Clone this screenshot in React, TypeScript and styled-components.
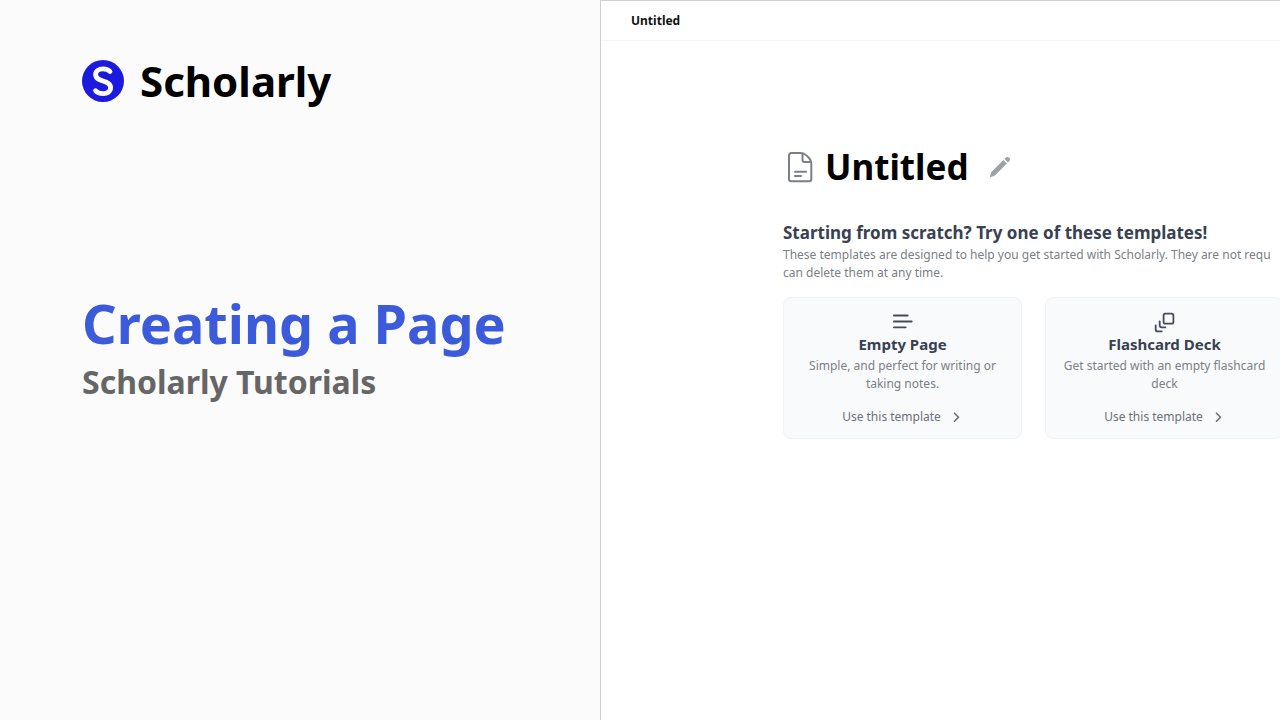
import React from "react";
import styled, { createGlobalStyle } from "styled-components";

const GlobalStyle = createGlobalStyle`
  * { box-sizing: border-box; }
  body {
    margin: 0;
    background: #fbfbfb;
    font-family: "Noto Sans", sans-serif;
  }
  h1, h2, h3, p { margin: 0; }
`;

const Page = styled.div`
  display: grid;
  grid-template-columns: 15fr 17fr;
  min-height: 100vh;
`;

const Intro = styled.section`
  background: #fbfbfb;
  padding: 52px 32px 0 82px;
`;

const Brand = styled.div`
  display: flex;
  align-items: center;
  gap: 16px;
  color: #000;
  font-size: 42px;
  line-height: 58px;
  font-weight: 700;
`;

const IntroTitle = styled.h1`
  margin-top: 176px;
  color: #3b5bdb;
  font-size: 54px;
  line-height: 74px;
  font-weight: 700;
  white-space: nowrap;
`;

const IntroSubtitle = styled.p`
  color: #666;
  font-size: 32px;
  line-height: 44px;
  font-weight: 700;
`;

const Preview = styled.main`
  min-width: 0;
  overflow: hidden;
  background: #fff;
  border: solid #d0d0d0;
  border-width: 1px 0 0 1px;
`;

const TopBar = styled.header`
  padding: 0 30px;
  border-bottom: 1px solid #f3f4f6;
  color: #111;
  font-size: 12px;
  line-height: 39px;
  font-weight: 700;
`;

const Content = styled.div`
  padding: 100px 0 0 182px;
`;

const TitleRow = styled.div`
  display: flex;
  align-items: center;
`;

const DocTitle = styled.h2`
  margin: 0 16px 0 8px;
  color: #000;
  font-size: 35px;
  line-height: 52px;
  font-weight: 700;
`;

const EditButton = styled.button`
  display: flex;
  padding: 4px;
  border: 0;
  background: none;
  cursor: pointer;
`;

const Heading = styled.h3`
  margin-top: 27px;
  color: #374151;
  font-size: 17px;
  line-height: 26px;
  font-weight: 700;
`;

const Description = styled.p`
  color: #7b7f86;
  font-size: 12px;
  line-height: 18px;
  white-space: nowrap;
`;

const Cards = styled.div`
  display: flex;
  gap: 23px;
  margin-top: 15px;
`;

const Card = styled.article`
  display: flex;
  flex: none;
  flex-direction: column;
  align-items: center;
  width: 239px;
  padding: 12px 16px 11px;
  border: 1px solid #f0f2f5;
  border-radius: 8px;
  background: #f9fafc;
  text-align: center;
`;

const CardTitle = styled.h3`
  color: #374151;
  font-size: 15px;
  line-height: 20px;
  font-weight: 700;
`;

const CardText = styled.p`
  margin-top: 3px;
  color: #7b7f86;
  font-size: 12px;
  line-height: 18px;
`;

const UseButton = styled.button`
  display: flex;
  align-items: center;
  gap: 8px;
  margin-top: 14px;
  padding: 0;
  border: 0;
  background: none;
  color: #6b7078;
  font: 12px/20px "Noto Sans", sans-serif;
  cursor: pointer;
`;

const Logo = () => (
  <svg width="42" height="42" viewBox="0 0 42 42" aria-hidden="true">
    <circle cx="21" cy="21" r="21" fill="#1d1ae0" />
    <path
      d="M28 11.5C26.3 9.6 23.8 8.8 21 8.8C16.8 8.8 13.6 11 13.6 14.6C13.6 18.5 17 19.7 21 21C25.4 22.4 28.6 23.6 28.6 27.6C28.6 31.4 25.6 33.6 21.2 33.6C18 33.6 15.3 32.7 13.6 30.7"
      fill="none"
      stroke="#fff"
      strokeWidth="4.8"
      strokeLinecap="round"
    />
  </svg>
);

const DocumentIcon = () => (
  <svg width="34" height="34" viewBox="0 0 34 34" fill="none" stroke="#7c7f8a" strokeWidth="2" strokeLinecap="round" strokeLinejoin="round" aria-hidden="true">
    <path d="M8.5 3H17.5Q21 3 23.4 5.4L25.8 7.8Q28.3 10.3 28.3 13.5V29Q28.3 31.2 26.1 31.2H8.2Q6 31.2 6 29V5.5Q6 3 8.5 3Z" />
    <path d="M19.5 3.5V10Q19.5 12 21.5 12H28M12 21.7H23M12 26H18" />
  </svg>
);

const PencilIcon = () => (
  <svg width="22" height="22" viewBox="0 0 22 22" fill="#9ca0a9" aria-hidden="true">
    <path d="M14.4 4.1L17.9 7.6L6.4 19.1Q5.8 19.7 5 20L1.6 21.1Q.7 21.3.9 20.4L2 17Q2.2 16.2 2.9 15.5ZM15.6 2.9L16.9 1.6Q18.6.2 20.3 1.7Q21.8 3.4 20.4 5.1L19.1 6.4Z" />
  </svg>
);

const LinesIcon = () => (
  <svg width="24" height="24" viewBox="0 0 24 24" fill="none" stroke="#454b57" strokeWidth="1.8" strokeLinecap="round" aria-hidden="true">
    <path d="M2.9 5.5H16.7M2.9 11.5H20.7M2.9 17.3H14.7" />
  </svg>
);

const DeckIcon = () => (
  <svg width="24" height="24" viewBox="0 0 24 24" fill="none" stroke="#454b57" strokeWidth="1.8" strokeLinecap="round" strokeLinejoin="round" aria-hidden="true">
    <rect x="10.6" y="3.7" width="9.8" height="10" rx="1.8" />
    <path d="M6.7 11.3V15.3Q6.7 17.3 8.7 17.3H12.4M2.7 15.3V19.4Q2.7 21.4 4.7 21.4H8.7" />
  </svg>
);

const ChevronIcon = () => (
  <svg width="14" height="14" viewBox="0 0 14 14" fill="none" stroke="#6b7078" strokeWidth="1.6" strokeLinecap="round" strokeLinejoin="round" aria-hidden="true">
    <path d="M5.5 3.2L9.5 7.2L5.5 11.2" />
  </svg>
);

const templates = [
  { title: "Empty Page", text: "Simple, and perfect for writing or taking notes.", Icon: LinesIcon },
  { title: "Flashcard Deck", text: "Get started with an empty flashcard deck", Icon: DeckIcon },
];

export default function App() {
  return (
    <>
      <GlobalStyle />
      <Page>
        <Intro>
          <Brand>
            <Logo />
            Scholarly
          </Brand>
          <IntroTitle>Creating a Page</IntroTitle>
          <IntroSubtitle>Scholarly Tutorials</IntroSubtitle>
        </Intro>
        <Preview>
          <TopBar>Untitled</TopBar>
          <Content>
            <TitleRow>
              <DocumentIcon />
              <DocTitle>Untitled</DocTitle>
              <EditButton aria-label="Edit title">
                <PencilIcon />
              </EditButton>
            </TitleRow>
            <Heading>Starting from scratch? Try one of these templates!</Heading>
            <Description>
              These templates are designed to help you get started with Scholarly. They are not requ
              <br />
              can delete them at any time.
            </Description>
            <Cards>
              {templates.map(({ title, text, Icon }) => (
                <Card key={title}>
                  <Icon />
                  <CardTitle>{title}</CardTitle>
                  <CardText>{text}</CardText>
                  <UseButton>
                    Use this template
                    <ChevronIcon />
                  </UseButton>
                </Card>
              ))}
            </Cards>
          </Content>
        </Preview>
      </Page>
    </>
  );
}
